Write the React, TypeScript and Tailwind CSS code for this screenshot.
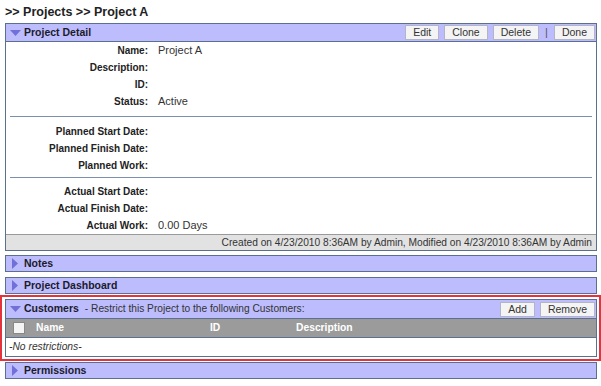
import React from 'react';

const font = { fontFamily: '"Liberation Sans", Arial, sans-serif' };

function Arrow({ open }: { open: boolean }) {
  // small triangle used in panel headers
  return open ? (
    <svg width="11" height="8" viewBox="0 0 11 8" className="shrink-0">
      <polygon points="0,1 11,1 5.5,7" fill="#7070d8" />
    </svg>
  ) : (
    <svg width="8" height="11" viewBox="0 0 8 11" className="shrink-0">
      <polygon points="1,0 7,5.5 1,11" fill="#7070d8" />
    </svg>
  );
}

function Btn({ children }: { children: React.ReactNode }) {
  return (
    <button className="h-[15px] px-[7px] border border-[#b4b4c8] bg-[#f4f4f4] text-[10.5px] leading-[13px] text-[#333]">
      {children}
    </button>
  );
}

function Header({ title, open, h = 'h-[15px]', children }: { title: string; open: boolean; h?: string; children?: React.ReactNode }) {
  return (
    <div className={`${h} bg-[#bdbdfd] flex items-center pl-[3px] pr-[1px]`}>
      <div className="w-[12px] flex justify-center">
        <Arrow open={open} />
      </div>
      <span className="ml-[3px] font-bold text-[10.5px] text-[#1b1b2b]">{title}</span>
      {children}
    </div>
  );
}

function Row({ label, value }: { label: string; value?: string }) {
  return (
    <div className="flex h-[17px] items-center">
      <div className="w-[142px] text-right font-bold text-[10px] text-[#222]">{label}</div>
      <div className="ml-[10px] text-[11px] text-[#333]">{value}</div>
    </div>
  );
}

export default function App() {
  return (
    <div className="w-[601px] h-[386px] bg-white pl-[5px] pr-[4px] overflow-hidden" style={font}>
      <div className="h-[23px] pt-[3px] font-bold text-[12.5px] text-[#222]">&gt;&gt; Projects &gt;&gt; Project A</div>

      <div className="border border-[#5b6f8f]">
        <div className="border-b border-[#5b6f8f]">
          <Header title="Project Detail" open h="h-[17px]">
            <div className="ml-auto flex items-center gap-[5px]">
              <Btn>Edit</Btn>
              <Btn>Clone</Btn>
              <Btn>Delete</Btn>
              <span className="mx-[1px] text-[11px] text-[#555]">|</span>
              <Btn>Done</Btn>
            </div>
          </Header>
        </div>
        <div className="bg-white">
          <div className="pt-0 pb-[6px]">
            <Row label="Name:" value="Project A" />
            <Row label="Description:" />
            <Row label="ID:" />
            <Row label="Status:" value="Active" />
          </div>
          <div className="mx-[4px] border-t border-[#7d8fae]" />
          <div className="pt-[6px] pb-[3px]">
            <Row label="Planned Start Date:" />
            <Row label="Planned Finish Date:" />
            <Row label="Planned Work:" />
          </div>
          <div className="mx-[4px] border-t border-[#7d8fae]" />
          <div className="pt-[5px] pb-0">
            <Row label="Actual Start Date:" />
            <Row label="Actual Finish Date:" />
            <Row label="Actual Work:" value="0.00 Days" />
          </div>
        </div>
        <div className="h-[16px] border-t border-[#9a9a9a] bg-[#e2e2e2] text-right pr-[4px] text-[10.2px] leading-[15px] text-[#333]">
          Created on 4/23/2010 8:36AM by Admin, Modified on 4/23/2010 8:36AM by Admin
        </div>
      </div>

      <div className="mt-[4px] border border-[#5b6f8f]">
        <Header title="Notes" open={false} />
      </div>

      <div className="mt-[5px] border border-[#5b6f8f]">
        <Header title="Project Dashboard" open={false} />
      </div>

      <div className="-ml-[5px] -mr-[4px] mt-[1px] border-2 border-[#e3333c] pl-[3px] pr-[2px] py-[2px]">
        <div className="border border-[#5b6f8f]">
          <div className="border-b border-[#5b6f8f]">
            <div className="h-[18px] bg-[#bdbdfd] flex items-center pl-[3px] pr-[1px]">
              <div className="w-[12px] flex justify-center">
                <Arrow open />
              </div>
              <span className="ml-[3px] font-bold text-[10.5px] text-[#1b1b2b]">Customers</span>
              <span className="ml-[6px] text-[10.2px] text-[#333]">- Restrict this Project to the following Customers:</span>
              <div className="ml-auto flex items-center gap-[5px]">
                <Btn>Add</Btn>
                <Btn>Remove</Btn>
              </div>
            </div>
          </div>
          <div className="h-[19px] bg-[#9b9b9b] flex items-center text-[10.3px] font-bold text-white border-b border-[#5b6f8f]">
            <div className="ml-[7px] w-[12px] h-[12px] bg-[#f4f4f4] border border-[#888]" />
            <div className="ml-[11px] w-[174px]">Name</div>
            <div className="w-[86px]">ID</div>
            <div>Description</div>
          </div>
          <div className="h-[18px] flex items-center pl-[3px] italic text-[10.3px] text-[#333] bg-white">-No restrictions-</div>
        </div>
      </div>

      <div className="mt-[1px] border border-[#5b6f8f]">
        <Header title="Permissions" open={false} />
      </div>
    </div>
  );
}
